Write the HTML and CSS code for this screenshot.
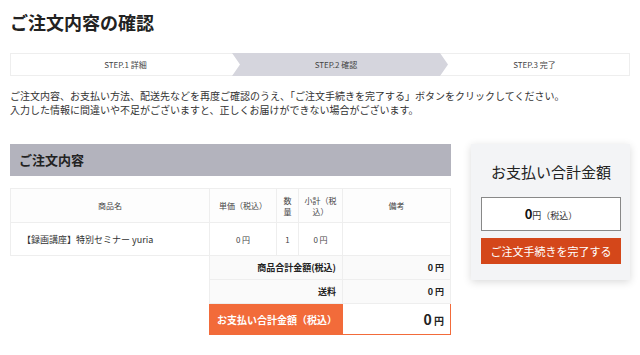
FILE: index.html
```html
<!DOCTYPE html>
<html lang="ja">
<head>
  <meta charset="UTF-8">
  <title>ご注文内容の確認</title>
  <link rel="stylesheet" href="styles.css">
</head>
<body>
  <h1>ご注文内容の確認</h1>

  <div class="steps">
    <div class="step step1">STEP.1 詳細</div>
    <div class="step step2">STEP.2 確認</div>
    <div class="step step3">STEP.3 完了</div>
  </div>

  <p class="aviso">
    ご注文内容、お支払い方法、配送先などを再度ご確認のうえ、「ご注文手続きを完了する」ボタンをクリックしてください。<br>
    入力した情報に間違いや不足がございますと、正しくお届けができない場合がございます。
  </p>

  <div class="principal">
    <div class="pedido">
      <h2>ご注文内容</h2>
      <table class="itens">
        <colgroup>
          <col style="width: 199px">
          <col style="width: 67px">
          <col style="width: 22px">
          <col style="width: 44px">
          <col>
        </colgroup>
        <tr class="cabecalho">
          <th>商品名</th>
          <th>単価（税込）</th>
          <th class="estreito">数量</th>
          <th>小計（税込）</th>
          <th>備考</th>
        </tr>
        <tr class="item">
          <td class="nome">【録画講座】特別セミナー yuria</td>
          <td>0 円</td>
          <td>1</td>
          <td>0 円</td>
          <td></td>
        </tr>
        <tr class="resumo">
          <td class="vazio"></td>
          <td colspan="3" class="rotulo">商品合計金額(税込)</td>
          <td class="valor">0 円</td>
        </tr>
        <tr class="resumo">
          <td class="vazio"></td>
          <td colspan="3" class="rotulo">送料</td>
          <td class="valor">0 円</td>
        </tr>
        <tr class="total">
          <td class="vazio"></td>
          <td colspan="3" class="rotulo">お支払い合計金額（税込）</td>
          <td class="valor"><span class="numero">0</span> 円</td>
        </tr>
      </table>
    </div>

    <div class="cartao">
      <div class="cartao-titulo">お支払い合計金額</div>
      <div class="cartao-valor"><span class="numero">0</span>円（税込）</div>
      <button class="concluir">ご注文手続きを完了する</button>
    </div>
  </div>
</body>
</html>
```

FILE: styles.css
```css
* {
  box-sizing: border-box;
}

body {
  margin: 0;
  padding: 10px;
  background: #ffffff;
  color: #333333;
  font-family: "Noto Sans CJK JP", "Noto Sans", sans-serif;
}

h1 {
  margin: 0 0 19px;
  font-size: 18px;
  line-height: 24px;
  font-weight: bold;
  color: #222222;
}

/* Etapas */
.steps {
  display: flex;
  height: 23px;
  border: 1px solid #eeeeee;
  background: #ffffff;
}

.step {
  display: flex;
  align-items: center;
  justify-content: center;
  font-size: 8px;
  color: #444444;
}

.step1 {
  width: 229px;
}

.step2 {
  width: 216px;
  margin-left: -8px;
  padding-right: 8px;
  margin-top: -1px;
  height: 23px;
  background: #d5d5dd;
  clip-path: polygon(0 0, calc(100% - 8px) 0, 100% 50%, calc(100% - 8px) 100%, 0 100%, 8px 50%);
}

.step3 {
  flex: 1;
  margin-left: -8px;
}

.aviso {
  margin: 13px 0 27px;
  font-size: 10px;
  line-height: 14px;
  color: #333333;
}

/* Conteudo principal */
.principal {
  display: flex;
  align-items: flex-start;
  gap: 20px;
}

.pedido {
  width: 441px;
}

.pedido h2 {
  margin: 0 0 12px;
  height: 32px;
  padding-left: 9px;
  background: #b3b3bd;
  font-size: 13px;
  line-height: 32px;
  color: #222222;
}

.itens {
  width: 441px;
  border-collapse: collapse;
  table-layout: fixed;
  font-size: 8px;
  color: #444444;
}

.itens th,
.itens td {
  border: 1px solid #eeeeee;
  padding: 0 5px;
  text-align: center;
  font-weight: normal;
}

.cabecalho th {
  height: 34px;
  line-height: 11px;
  background: #fdfdfd;
}

.itens th.estreito {
  padding: 0 4px;
}

.item td {
  height: 33px;
}

.item td.nome {
  text-align: left;
  padding-left: 11px;
  font-size: 9px;
  color: #333333;
}

.itens td.vazio {
  border: none;
  background: #ffffff;
}

.resumo td {
  height: 24px;
  background: #fafafa;
  font-weight: bold;
  font-size: 9px;
  color: #222222;
}

.resumo td.rotulo,
.resumo td.valor,
.total td.valor {
  text-align: right;
  padding-right: 6px;
}

.total td {
  height: 31px;
}

.total td.rotulo {
  background: #f26b3a;
  border-color: #f26b3a;
  color: #ffffff;
  font-weight: bold;
  font-size: 10px;
  text-align: left;
  padding-left: 7px;
}

.total td.valor {
  border: 1px solid #f26b3a;
  background: #ffffff;
  font-weight: bold;
  font-size: 10px;
  color: #222222;
}

.total .numero {
  font-size: 14px;
}

/* Cartao lateral */
.cartao {
  width: 162px;
  padding: 18px 9px 16px 10px;
  background: #f3f4f6;
  box-shadow: 0 2px 8px rgba(0, 0, 0, 0.15);
  text-align: center;
}

.cartao-titulo {
  font-size: 15px;
  line-height: 20px;
  color: #222222;
  margin-bottom: 15px;
}

.cartao-valor {
  height: 34px;
  border: 1px solid #888888;
  background: #ffffff;
  font-size: 9px;
  line-height: 32px;
  color: #333333;
}

.cartao-valor .numero {
  font-size: 13px;
  font-weight: bold;
  color: #111111;
}

.concluir {
  display: block;
  width: 100%;
  height: 26px;
  margin-top: 7px;
  border: none;
  background: #d4471a;
  color: #ffffff;
  font-family: inherit;
  font-size: 11px;
  cursor: pointer;
}
```
